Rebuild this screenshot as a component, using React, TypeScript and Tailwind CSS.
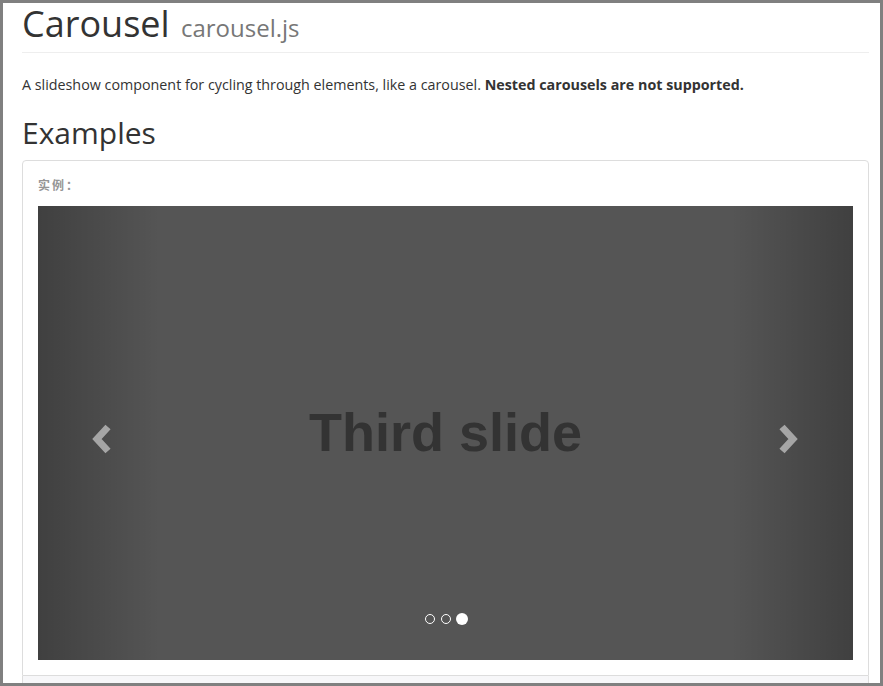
import React from 'react';

const ChevronLeft: React.FC = () => (
  <svg width="24" height="30" viewBox="0 0 24 30" className="block">
    <polyline points="19,3 8,15 19,27" fill="none" stroke="white" strokeWidth="7" strokeLinejoin="miter" />
  </svg>
);

const ChevronRight: React.FC = () => (
  <svg width="24" height="30" viewBox="0 0 24 30" className="block">
    <polyline points="5,3 16,15 5,27" fill="none" stroke="white" strokeWidth="7" strokeLinejoin="miter" />
  </svg>
);

const Carousel: React.FC = () => {
  const slides = [0, 1, 2];
  const active = 2;

  return (
    <div className="relative h-[454px] w-full overflow-hidden bg-[#555]">
      {/* slide placeholder */}
      <div className="flex h-full w-full items-center justify-center">
        <span className="text-[54px] font-bold leading-none text-[#333] font-['Liberation_Sans',Arial,sans-serif] -mt-[2px]">
          Third slide
        </span>
      </div>

      {/* controls */}
      <div className="absolute inset-y-0 left-0 flex w-[15%] items-center bg-linear-to-r from-black/25 to-transparent">
        <div className="ml-[51px] mt-[11px] opacity-50">
          <ChevronLeft />
        </div>
      </div>
      <div className="absolute inset-y-0 right-0 flex w-[15%] items-center justify-end bg-linear-to-r from-transparent to-black/25">
        <div className="mr-[52px] mt-[11px] opacity-50">
          <ChevronRight />
        </div>
      </div>

      {/* indicators */}
      <div className="absolute bottom-[35px] left-0 right-0 flex items-center justify-center gap-[4px] pl-[1px]">
        {slides.map((i) =>
          i === active ? (
            <span key={i} className="h-[12px] w-[12px] rounded-full bg-white" />
          ) : (
            <span key={i} className="m-px h-[10px] w-[10px] rounded-full border border-white" />
          )
        )}
      </div>
    </div>
  );
};

const App: React.FC = () => {
  return (
    <div className="h-[686px] w-[883px] overflow-hidden border-[3px] border-[#808080] bg-white font-['Open_Sans',sans-serif] text-[#333]">
      <div className="pl-[19px] pr-[11px]">
        <div className="border-b border-[#eee] pb-[9px]">
          <h1 className="pt-[2px] text-[36px] leading-[38px] font-normal">
            Carousel <small className="ml-[2px] text-[24px] leading-none font-normal text-[#777]">carousel.js</small>
          </h1>
        </div>

        <p className="mt-[22px] text-[14.3px] leading-[20px]">
          A slideshow component for cycling through elements, like a carousel.{' '}
          <strong className="font-bold">Nested carousels are not supported.</strong>
        </p>

        <h2 className="mt-[21px] text-[30px] leading-[33px] font-normal">Examples</h2>

        <div className="relative mt-[11px] rounded-t-[4px] border border-[#ddd] px-[15px] pt-[45px] pb-[15px]">
          <span className="absolute left-[15px] top-[16px] text-[12px] font-bold tracking-[2px] text-[#959595] font-['Open_Sans','Noto_Sans_CJK_SC',sans-serif]">
            实例：
          </span>
          <Carousel />
        </div>
        <div className="h-[20px] border-x border-[#ddd] bg-[#f7f7f9]" />
      </div>
    </div>
  );
};

export default App;
